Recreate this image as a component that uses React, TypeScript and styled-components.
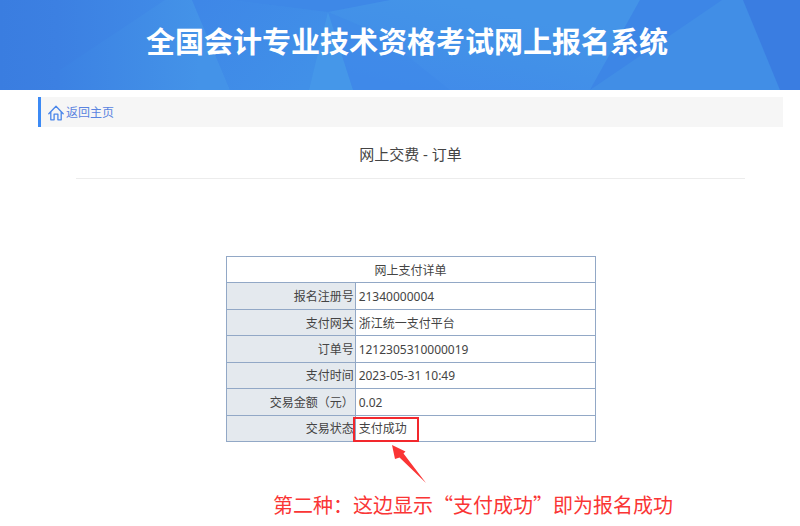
import React from "react";
import styled, { createGlobalStyle } from "styled-components";

const GlobalStyle = createGlobalStyle`
  * { box-sizing: border-box; }
  body {
    margin: 0;
    background: #fff;
    color: #444;
    font-family: "Noto Sans", "Noto Sans CJK SC", sans-serif;
    font-size: 12px;
  }
`;

const Banner = styled.header`
  position: relative;
  display: flex;
  align-items: center;
  justify-content: center;
  height: 90px;
  padding: 0 0 10px 14px;
  background: #408be7;
  overflow: hidden;
`;

const BannerArt = styled.svg`
  position: absolute;
  inset: 0;
  width: 100%;
  height: 100%;
`;

const BannerTitle = styled.h1`
  position: relative;
  margin: 0;
  color: #fff;
  font-family: "Noto Sans CJK SC", sans-serif;
  font-size: 29px;
  font-weight: 700;
  line-height: 40px;
  white-space: nowrap;
`;

const Page = styled.main`
  margin: 7px 17px 0 38px;
`;

const NavBar = styled.nav`
  display: flex;
  align-items: center;
  height: 30px;
  padding-left: 7px;
  border-left: 3px solid #3c8af5;
  background: #f6f6f6;
`;

const HomeLink = styled.a`
  display: flex;
  align-items: center;
  gap: 2px;
  padding-top: 1px;
  color: #5a84e0;
  line-height: 18px;
  text-decoration: none;
`;

const PageTitle = styled.h2`
  margin: 0 38px 77px;
  padding: 15px 0 12px;
  border-bottom: 1px solid #ececec;
  font-size: 15px;
  font-weight: 400;
  line-height: 24px;
  text-align: center;
`;

const OrderTable = styled.table`
  width: 370px;
  max-width: 100%;
  height: 186px;
  margin: 0 auto;
  border-collapse: collapse;
  table-layout: fixed;
  line-height: 18px;
`;

const LabelCol = styled.col`
  width: 35%;
`;

const TableTitle = styled.th`
  padding: 2px 2px 0;
  border: 1px solid #92a8c6;
  font-weight: 400;
`;

const LabelCell = styled.th`
  padding: 2px 1px 0;
  border: 1px solid #92a8c6;
  background: #e4e9ee;
  font-weight: 400;
  text-align: right;
`;

const ValueCell = styled.td`
  padding: 2px 3px 0;
  border: 1px solid #92a8c6;
`;

const Marked = styled.span`
  position: relative;
  display: inline-block;
`;

const MarkBox = styled.span`
  position: absolute;
  inset: -3px -12px -4px -6px;
  border: 2px solid #f2282d;
`;

const Arrow = styled.svg`
  position: absolute;
  top: 24px;
  left: 32px;
`;

const Note = styled.p`
  margin: 48px 0 0 235px;
  color: #fa3535;
  font-family: "Noto Sans CJK SC", sans-serif;
  font-size: 20px;
  line-height: 30px;
  white-space: nowrap;
`;

const rows = [
  { label: "报名注册号", value: "21340000004" },
  { label: "支付网关", value: "浙江统一支付平台" },
  { label: "订单号", value: "1212305310000019" },
  { label: "支付时间", value: "2023-05-31 10:49" },
  { label: "交易金额（元）", value: "0.02" },
  { label: "交易状态", value: "支付成功", marked: true },
];

function HomeIcon() {
  return (
    <svg width="16" height="16" viewBox="0 0 16 16" fill="none" stroke="#4a86ea" strokeWidth="1.3" strokeLinejoin="round" strokeLinecap="round" aria-hidden="true">
      <path d="M.8 8.7 8 1.2l7.2 7.5M2.8 7v7.8h3.3V9.2h3.8v5.6h3.3V7" />
    </svg>
  );
}

export default function App() {
  return (
    <div lang="zh-CN">
      <GlobalStyle />
      <Banner>
        <BannerArt viewBox="0 0 800 90" preserveAspectRatio="none" aria-hidden="true">
          <defs>
            <linearGradient id="left" gradientUnits="userSpaceOnUse" x1="0" x2="192" y1="0" y2="0">
              <stop offset="0" stopColor="#3a7de0" />
              <stop offset=".3" stopColor="#3c80e2" />
              <stop offset="1" stopColor="#418de8" />
            </linearGradient>
            <linearGradient id="ray" gradientUnits="userSpaceOnUse" x1="60" x2="200" y1="0" y2="0">
              <stop offset="0" stopColor="#3c82e3" />
              <stop offset="1" stopColor="#4493e8" />
            </linearGradient>
            <linearGradient id="facet" gradientUnits="userSpaceOnUse" x1="200" x2="300" y1="0" y2="90">
              <stop offset="0" stopColor="#3e87e7" />
              <stop offset="1" stopColor="#4190e8" />
            </linearGradient>
            <linearGradient id="center" gradientUnits="userSpaceOnUse" x1="440" x2="420" y1="0" y2="90">
              <stop offset="0" stopColor="#4494e8" />
              <stop offset=".5" stopColor="#4290e8" />
              <stop offset="1" stopColor="#418bea" />
            </linearGradient>
          </defs>
          <path fill="url(#left)" d="M0 0h200v90H0z" />
          <path fill="url(#ray)" d="M60 70 165 0h27l38 90H60z" />
          <path fill="url(#facet)" d="M192 0h80l56 12 25 78H230z" />
          <path fill="url(#center)" d="M230 0h410l-50 90H353L328 12z" />
          <path fill="#3e88e7" d="M230 0h160l-62 12z" />
          <path fill="#3f88e8" d="m328 12 52 22 70 56h-97z" opacity=".45" />
          <path fill="#4799e9" d="m328 12 25 78h-44z" opacity=".75" />
          <path fill="#3d86e6" d="M640 0h86L590 90z" />
          <path fill="#418ee6" d="M722 0h21l37 90H590z" />
          <path fill="#3a7de1" d="M743 0h57v90h-20z" />
        </BannerArt>
        <BannerTitle>全国会计专业技术资格考试网上报名系统</BannerTitle>
      </Banner>
      <Page>
        <NavBar>
          <HomeLink href="#">
            <HomeIcon />
            返回主页
          </HomeLink>
        </NavBar>
        <PageTitle>网上交费 - 订单</PageTitle>
        <OrderTable>
          <colgroup>
            <LabelCol />
            <col />
          </colgroup>
          <tbody>
            <tr>
              <TableTitle colSpan={2}>网上支付详单</TableTitle>
            </tr>
            {rows.map((row) => (
              <tr key={row.label}>
                <LabelCell scope="row">{row.label}</LabelCell>
                <ValueCell>
                  {row.marked ? (
                    <Marked>
                      {row.value}
                      <MarkBox />
                      <Arrow width="36" height="40" viewBox="0 0 36 40" aria-hidden="true">
                        <path fill="#fa3535" d="M1 1 14.5 7.5 12.5 9.5 35 39 8.5 13.5 4 15z" />
                      </Arrow>
                    </Marked>
                  ) : (
                    row.value
                  )}
                </ValueCell>
              </tr>
            ))}
          </tbody>
        </OrderTable>
        <Note>第二种：这边显示“支付成功”即为报名成功</Note>
      </Page>
    </div>
  );
}
